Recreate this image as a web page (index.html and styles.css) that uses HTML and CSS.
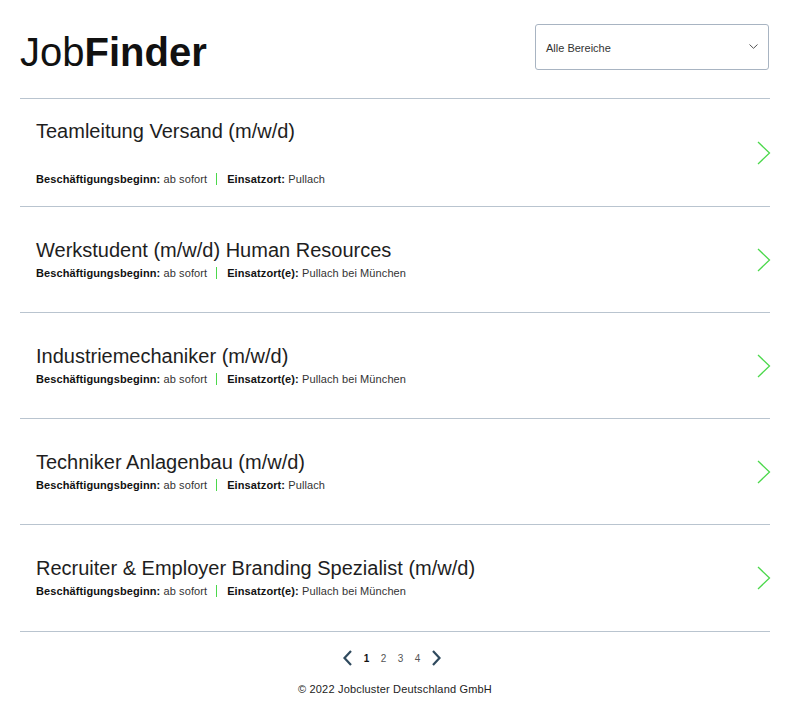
FILE: index.html
```html
<!DOCTYPE html>
<html lang="de">
<head>
<meta charset="utf-8">
<title>JobFinder</title>
<link rel="stylesheet" href="styles.css">
</head>
<body>
<div class="page">
  <header class="header">
    <h1 class="logo"><span class="logo-light">Job</span><span class="logo-bold">Finder</span></h1>
    <div class="select">
      <span class="select-label">Alle Bereiche</span>
      <svg class="select-chevron" width="9" height="5" viewBox="0 0 9 5"><path d="M0.5 0.5 L4.5 4.3 L8.5 0.5" fill="none" stroke="#555" stroke-width="1"/></svg>
    </div>
  </header>
  <ul class="jobs">
    <li class="job job-first">
      <div class="job-body">
        <div class="job-title">Teamleitung Versand (m/w/d)</div>
        <div class="job-meta"><b>Beschäftigungsbeginn:</b> ab sofort<span class="sep"></span><b>Einsatzort:</b> Pullach</div>
      </div>
      <svg class="job-arrow" width="14" height="24" viewBox="0 0 14 24"><path d="M1 1 L12.5 12 L1 23" fill="none" stroke="#4bd84b" stroke-width="1.3"/></svg>
    </li>
    <li class="job">
      <div class="job-body">
        <div class="job-title">Werkstudent (m/w/d) Human Resources</div>
        <div class="job-meta"><b>Beschäftigungsbeginn:</b> ab sofort<span class="sep"></span><b>Einsatzort(e):</b> Pullach bei München</div>
      </div>
      <svg class="job-arrow" width="14" height="24" viewBox="0 0 14 24"><path d="M1 1 L12.5 12 L1 23" fill="none" stroke="#4bd84b" stroke-width="1.3"/></svg>
    </li>
    <li class="job">
      <div class="job-body">
        <div class="job-title">Industriemechaniker (m/w/d)</div>
        <div class="job-meta"><b>Beschäftigungsbeginn:</b> ab sofort<span class="sep"></span><b>Einsatzort(e):</b> Pullach bei München</div>
      </div>
      <svg class="job-arrow" width="14" height="24" viewBox="0 0 14 24"><path d="M1 1 L12.5 12 L1 23" fill="none" stroke="#4bd84b" stroke-width="1.3"/></svg>
    </li>
    <li class="job">
      <div class="job-body">
        <div class="job-title">Techniker Anlagenbau (m/w/d)</div>
        <div class="job-meta"><b>Beschäftigungsbeginn:</b> ab sofort<span class="sep"></span><b>Einsatzort:</b> Pullach</div>
      </div>
      <svg class="job-arrow" width="14" height="24" viewBox="0 0 14 24"><path d="M1 1 L12.5 12 L1 23" fill="none" stroke="#4bd84b" stroke-width="1.3"/></svg>
    </li>
    <li class="job job-last">
      <div class="job-body">
        <div class="job-title">Recruiter &amp; Employer Branding Spezialist (m/w/d)</div>
        <div class="job-meta"><b>Beschäftigungsbeginn:</b> ab sofort<span class="sep"></span><b>Einsatzort(e):</b> Pullach bei München</div>
      </div>
      <svg class="job-arrow" width="14" height="24" viewBox="0 0 14 24"><path d="M1 1 L12.5 12 L1 23" fill="none" stroke="#4bd84b" stroke-width="1.3"/></svg>
    </li>
  </ul>
  <nav class="pager">
    <svg class="pager-arrow" width="11" height="16" viewBox="0 0 11 16"><path d="M9 1 L2.5 8 L9 15" fill="none" stroke="#2f4a5e" stroke-width="2.2"/></svg>
    <span class="pager-num active">1</span>
    <span class="pager-num">2</span>
    <span class="pager-num">3</span>
    <span class="pager-num">4</span>
    <svg class="pager-arrow" width="11" height="16" viewBox="0 0 11 16"><path d="M2 1 L8.5 8 L2 15" fill="none" stroke="#2f4a5e" stroke-width="2.2"/></svg>
  </nav>
  <footer class="footer">© 2022 Jobcluster Deutschland GmbH</footer>
</div>
</body>
</html>
```
FILE: styles.css
```css
* { box-sizing: border-box; }
html, body { margin: 0; padding: 0; background: #fff; }
body {
  font-family: "Liberation Sans", Arial, sans-serif;
  color: #1e1e1e;
}
.page {
  width: 750px;
  margin-left: 20px;
}
.header {
  display: flex;
  justify-content: space-between;
  align-items: flex-start;
  height: 99px;
  border-bottom: 1px solid #b9c4cf;
}
.logo {
  margin: 29px 0 0 0;
  font-size: 40px;
  line-height: 46px;
  font-weight: normal;
  color: #111;
}
.logo-light { font-weight: normal; }
.logo-bold { font-weight: bold; }
.select {
  margin-top: 24px;
  margin-right: 1px;
  width: 234px;
  height: 46px;
  border: 1px solid #a8b4c2;
  border-radius: 3px;
  display: flex;
  align-items: center;
  justify-content: space-between;
  padding: 1px 10px 0 10px;
}
.select-label {
  font-size: 11px;
  color: #333;
}
.select-chevron { display: block; margin-top: -3px; }
.jobs {
  list-style: none;
  margin: 0;
  padding: 0;
}
.job {
  display: flex;
  align-items: flex-start;
  justify-content: space-between;
  height: 106px;
  border-bottom: 1px solid #b9c4cf;
  padding-left: 16px;
}
.job-first { height: 108px; }
.job-last { height: 107px; }
.job-body {
  display: flex;
  flex-direction: column;
  margin-top: 31px;
}
.job-first .job-body { margin-top: 20px; }
.job-title {
  font-size: 20px;
  line-height: 24px;
  color: #1e1e1e;
}
.job-first .job-title { margin-bottom: 25px; }
.job-meta {
  margin-top: 4px;
  font-size: 11px;
  line-height: 14px;
  letter-spacing: 0.1px;
  color: #333;
  display: flex;
  align-items: center;
  white-space: pre;
}
.job-meta b { color: #111; font-weight: bold; }
.sep {
  display: inline-block;
  width: 1px;
  height: 12px;
  background: #4bd84b;
  margin: 0 10px 0 9px;
}
.job-arrow { display: block; margin-right: -1px; align-self: center; }
.pager {
  display: flex;
  justify-content: center;
  align-items: center;
  height: 50px;
  padding-top: 2px;
  padding-right: 6px;
}
.pager-arrow { display: block; margin: 0 5px; }
.pager-num {
  font-size: 10px;
  color: #555;
  width: 17px;
  text-align: center;
}
.pager-num.active { font-weight: bold; color: #111; }
.footer {
  text-align: center;
  font-size: 11px;
  letter-spacing: 0.18px;
  color: #222;
  padding-top: 1px;
}
```
